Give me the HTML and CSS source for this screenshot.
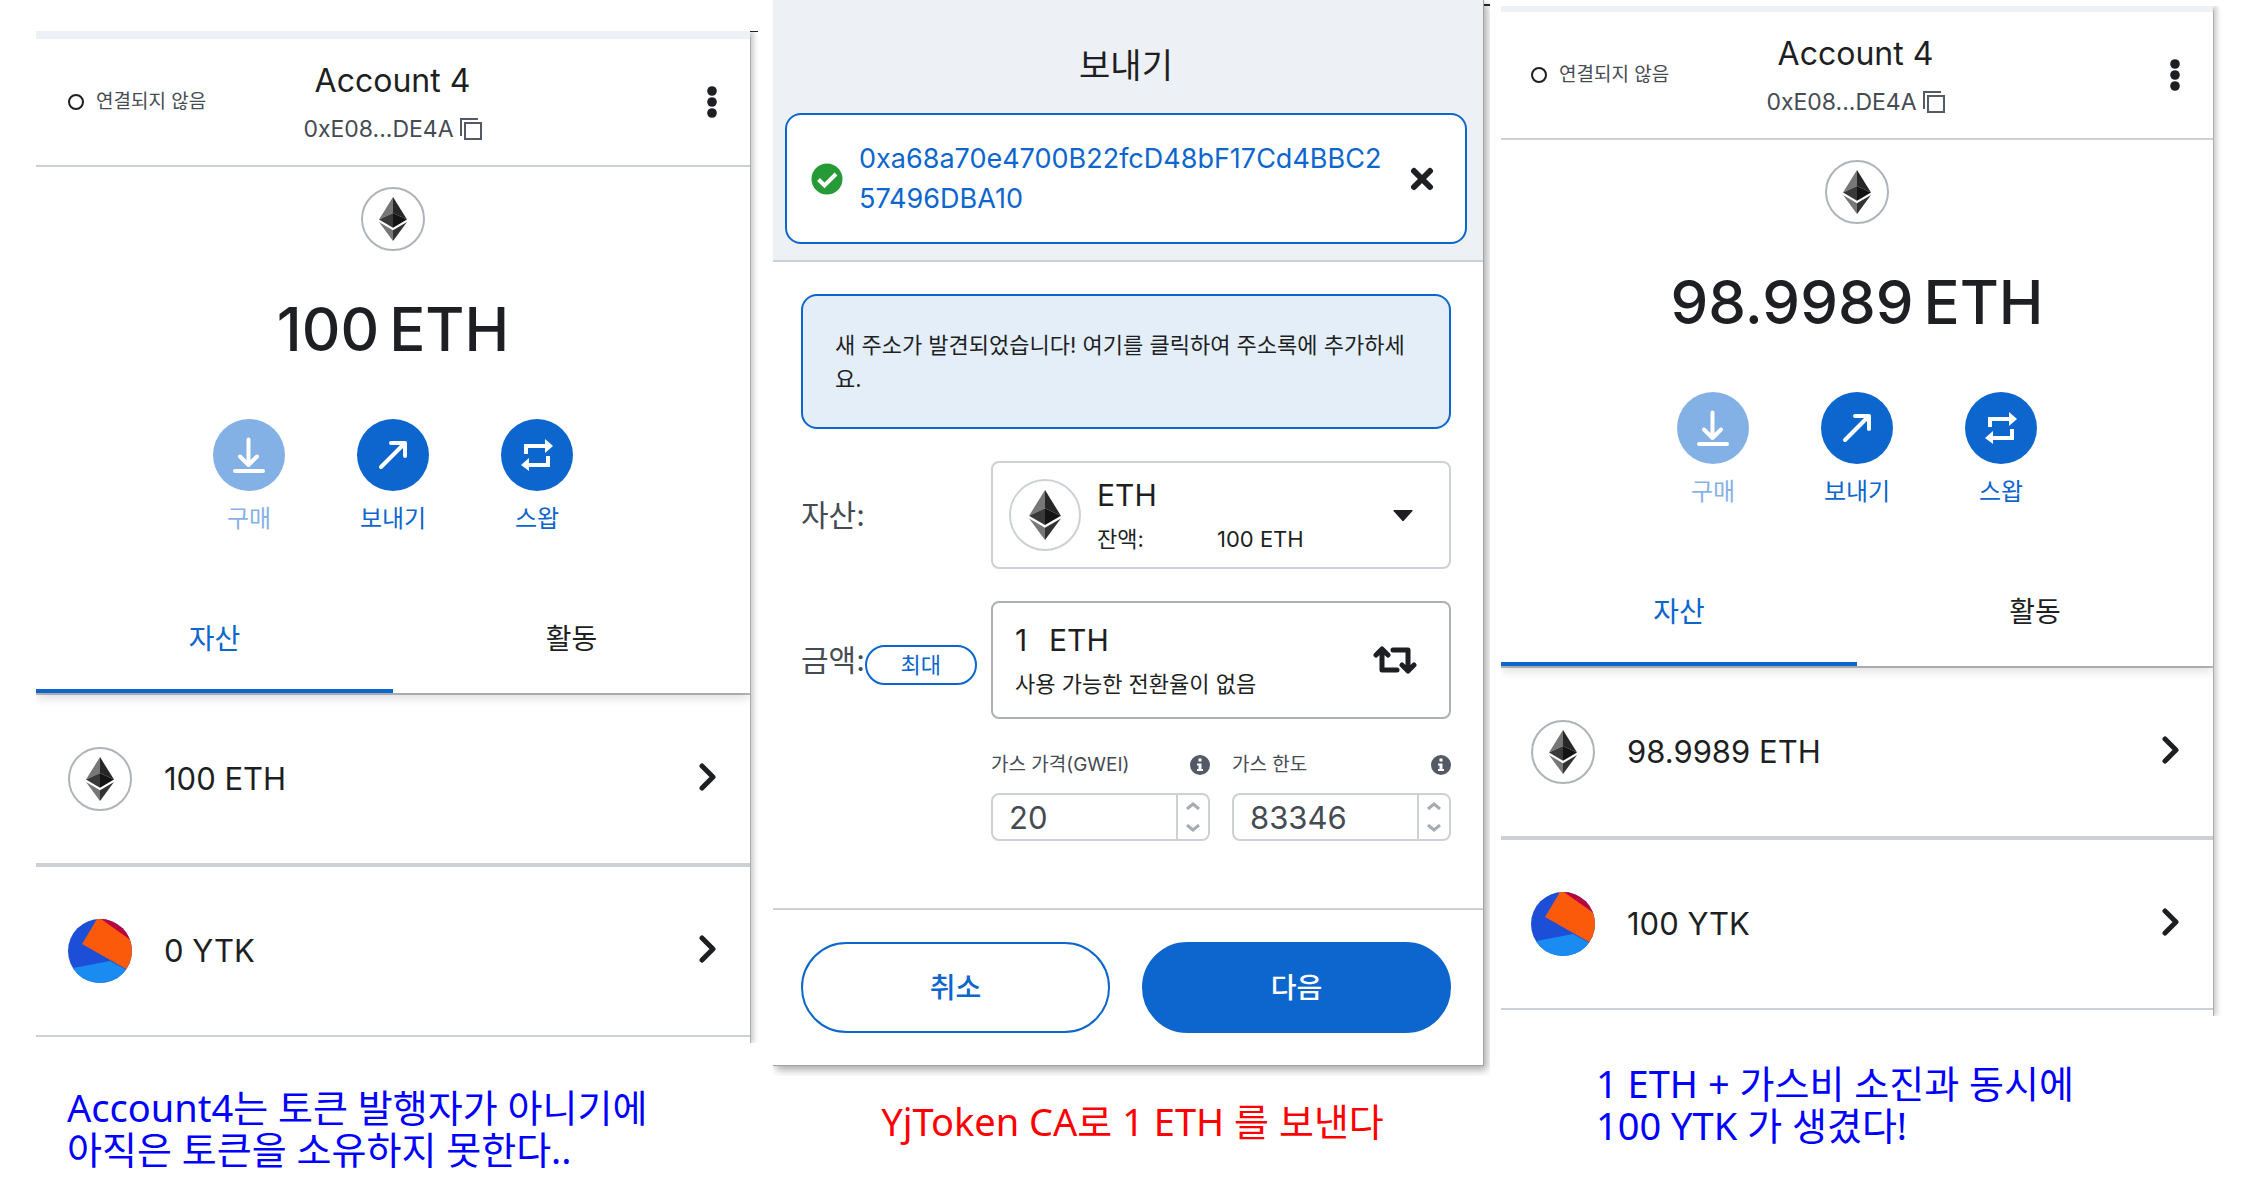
FILE: index.html
```html
<!DOCTYPE html>
<html lang="ko">
<head>
<meta charset="utf-8">
<meta name="viewport" content="width=device-width, initial-scale=1">
<title>YjToken</title>
<link rel="stylesheet" href="styles.css">
</head>
<body>
<svg class="defs" aria-hidden="true">
  <symbol id="eth" viewBox="0 0 28 44">
    <path fill="#777" d="M14 0 0 22.600 14 16z"/>
    <path fill="#272727" d="M14 0v16l14 6.600z"/>
    <path fill="#393939" d="M0 22.600 14 16v14.700z"/>
    <path fill="#141414" d="M14 16v14.700l14-8.100z"/>
    <path fill="#777" d="M0 25 14 33.200V44z"/>
    <path fill="#333" d="M28 25 14 33.200V44z"/>
  </symbol>
  <symbol id="copy" viewBox="0 0 22 22">
    <path fill="none" stroke="#535a66" stroke-width="2" d="M1 18V1h17M5 5h16v16H5z"/>
  </symbol>
  <symbol id="dots" viewBox="0 0 10 32">
    <g fill="#1d1f23"><circle cx="5" cy="5" r="4.800"/><circle cx="5" cy="16" r="4.800"/><circle cx="5" cy="27" r="4.800"/></g>
  </symbol>
  <symbol id="chevron" viewBox="0 0 17 28">
    <path fill="none" stroke="#1d1f23" stroke-width="5" stroke-linecap="round" stroke-linejoin="round" d="m3 3 11 11L3 25"/>
  </symbol>
  <symbol id="buy" viewBox="0 0 32 36">
    <g fill="none" stroke="#fff" stroke-width="4" stroke-linecap="round" stroke-linejoin="round"><path d="M15.500 2.500v25M7 19.500l8.500 8.500 8.500-8.500"/><path d="M2 34h28"/></g>
  </symbol>
  <symbol id="send" viewBox="0 0 30 30">
    <path fill="none" stroke="#fff" stroke-width="4" stroke-linecap="round" stroke-linejoin="round" d="M3 27 27 3M13 3h14v13"/>
  </symbol>
  <symbol id="swap" viewBox="0 0 32 32">
    <g fill="none" stroke="#fff" stroke-width="4"><path d="M5 15V7h20"/><path d="M27 17v9H8"/></g>
    <path fill="#fff" d="M24 0l8 7-8 7zM8 19l-8 7 8 6z"/>
  </symbol>
  <symbol id="ytk" viewBox="0 0 64 64">
    <path fill="#1c4ed8" d="M0 0h64v64H0z"/>
    <path fill="#b8003f" d="M30 0h34v24z"/>
    <path fill="#fa5a0a" d="M29 0h4l31 22v34l-6-6-44-25z"/>
    <path fill="#1a8bf0" d="M0 50 42 42l22 12v10H0z"/>
  </symbol>
  <symbol id="info" viewBox="0 0 20 20">
    <circle cx="10" cy="10" r="10" fill="#535a66"/>
    <path fill="#fff" d="M8.500 3.500h3v3h-3zM7 8.500h4.500V14H13v2H7v-2h1.500v-3.500H7z"/>
  </symbol>
  <symbol id="up" viewBox="0 0 14 8"><path fill="none" stroke="#a5abb1" stroke-width="3" d="m1 7 6-5 6 5"/></symbol>
  <symbol id="down" viewBox="0 0 14 8"><path fill="none" stroke="#a5abb1" stroke-width="3" d="m1 1 6 5 6-5"/></symbol>
</svg>

<main class="board">
  <section class="column column-before">
    <article class="wallet">
      <header class="wallet-header">
        <span class="status"><i class="status-dot"></i>연결되지 않음</span>
        <div class="account">
          <h2 class="account-name">Account 4</h2>
          <button class="address" type="button">0xE08...DE4A<svg width="22" height="22"><use href="#copy"/></svg></button>
        </div>
        <button class="menu" type="button" aria-label="메뉴"><svg width="10" height="32"><use href="#dots"/></svg></button>
      </header>
      <div class="overview">
        <span class="token"><svg width="28" height="44"><use href="#eth"/></svg></span>
        <p class="balance"><span>100</span><span>ETH</span></p>
        <div class="actions">
          <button class="action" type="button" disabled><span class="disc"><svg width="32" height="36"><use href="#buy"/></svg></span>구매</button>
          <button class="action" type="button"><span class="disc"><svg width="30" height="30"><use href="#send"/></svg></span>보내기</button>
          <button class="action" type="button"><span class="disc"><svg width="32" height="32"><use href="#swap"/></svg></span>스왑</button>
        </div>
      </div>
      <div class="tabs" role="tablist">
        <button class="tab" type="button" role="tab" aria-selected="true">자산</button>
        <button class="tab" type="button" role="tab" aria-selected="false">활동</button>
      </div>
      <ul class="assets">
        <li><button class="asset" type="button"><span class="token"><svg width="28" height="44"><use href="#eth"/></svg></span><span class="asset-name">100 ETH</span><svg class="chevron" width="17" height="28"><use href="#chevron"/></svg></button></li>
        <li><button class="asset" type="button"><svg class="token-art" width="64" height="64"><use href="#ytk"/></svg><span class="asset-name">0 YTK</span><svg class="chevron" width="17" height="28"><use href="#chevron"/></svg></button></li>
      </ul>
    </article>
    <p class="note note-before">Account4는 토큰 발행자가 아니기에<br>아직은 토큰을 소유하지 못한다..</p>
  </section>

  <section class="column column-send">
    <form class="send">
      <header class="send-header">
        <h2 class="send-title">보내기</h2>
        <div class="recipient">
          <svg width="32" height="32" viewBox="0 0 32 32"><circle cx="16" cy="16" r="15.500" fill="#259a36"/><path fill="none" stroke="#fff" stroke-width="4" d="m7.500 16.500 6 6L25 11"/></svg>
          <span class="recipient-address">0xa68a70e4700B22fcD48bF17Cd4BBC257496DBA10</span>
          <button class="clear" type="button" aria-label="지우기"><svg width="24" height="24" viewBox="0 0 24 24"><path fill="none" stroke="#1d1f23" stroke-width="6" stroke-linecap="round" d="m4 4 16 16M20 4 4 20"/></svg></button>
        </div>
      </header>
      <div class="send-body">
        <button class="notice" type="button">새 주소가 발견되었습니다! 여기를 클릭하여 주소록에 추가하세요.</button>
        <div class="row">
          <div class="row-label"><label for="asset">자산:</label></div>
          <div class="field field-asset">
            <span class="token token-large"><svg width="32" height="50"><use href="#eth"/></svg></span>
            <div class="field-text">
              <select class="asset-select" id="asset"><option>ETH</option></select>
              <p class="field-sub"><span class="field-key">잔액:</span><span>100 ETH</span></p>
            </div>
            <svg width="20" height="11" viewBox="0 0 20 11"><path fill="#1d1f23" d="M1 0h18q1 0 .5 1L11 10.500q-1 1-2 0L.5 1Q0 0 1 0z"/></svg>
          </div>
        </div>
        <div class="row">
          <div class="row-label"><label for="amount">금액:</label><button class="max" type="button">최대</button></div>
          <div class="field field-amount">
            <div class="field-text">
              <div class="amount-line"><input class="amount" id="amount" value="1"><span>ETH</span></div>
              <p class="field-sub">사용 가능한 전환율이 없음</p>
            </div>
            <button class="switch" type="button" aria-label="통화 전환"><svg width="44" height="28" viewBox="0 0 44 28"><g fill="none" stroke="#1d1f23" stroke-width="5" stroke-linecap="round" stroke-linejoin="round"><path d="M9 4v20h15M3 9l6-6 6 6"/><path d="M20 4h15v20M29 19l6 6 6-6"/></g></svg></button>
          </div>
        </div>
        <div class="gas">
          <div class="gas-item">
            <div class="gas-label"><label for="price">가스 가격(GWEI)</label><svg width="20" height="20"><use href="#info"/></svg></div>
            <div class="stepper"><input id="price" value="20"><div class="steps"><button type="button" aria-label="증가"><svg width="14" height="8"><use href="#up"/></svg></button><button type="button" aria-label="감소"><svg width="14" height="8"><use href="#down"/></svg></button></div></div>
          </div>
          <div class="gas-item">
            <div class="gas-label"><label for="limit">가스 한도</label><svg width="20" height="20"><use href="#info"/></svg></div>
            <div class="stepper"><input id="limit" value="83346"><div class="steps"><button type="button" aria-label="증가"><svg width="14" height="8"><use href="#up"/></svg></button><button type="button" aria-label="감소"><svg width="14" height="8"><use href="#down"/></svg></button></div></div>
          </div>
        </div>
      </div>
      <footer class="send-footer">
        <button class="button" type="button">취소</button>
        <button class="button button-primary" type="button">다음</button>
      </footer>
    </form>
    <p class="note note-send">YjToken CA로 1 ETH 를 보낸다</p>
  </section>

  <section class="column column-after">
    <article class="wallet wallet-after">
      <header class="wallet-header">
        <span class="status"><i class="status-dot"></i>연결되지 않음</span>
        <div class="account">
          <h2 class="account-name">Account 4</h2>
          <button class="address" type="button">0xE08...DE4A<svg width="22" height="22"><use href="#copy"/></svg></button>
        </div>
        <button class="menu" type="button" aria-label="메뉴"><svg width="10" height="32"><use href="#dots"/></svg></button>
      </header>
      <div class="overview">
        <span class="token"><svg width="28" height="44"><use href="#eth"/></svg></span>
        <p class="balance"><span>98.9989</span><span>ETH</span></p>
        <div class="actions">
          <button class="action" type="button" disabled><span class="disc"><svg width="32" height="36"><use href="#buy"/></svg></span>구매</button>
          <button class="action" type="button"><span class="disc"><svg width="30" height="30"><use href="#send"/></svg></span>보내기</button>
          <button class="action" type="button"><span class="disc"><svg width="32" height="32"><use href="#swap"/></svg></span>스왑</button>
        </div>
      </div>
      <div class="tabs" role="tablist">
        <button class="tab" type="button" role="tab" aria-selected="true">자산</button>
        <button class="tab" type="button" role="tab" aria-selected="false">활동</button>
      </div>
      <ul class="assets">
        <li><button class="asset" type="button"><span class="token"><svg width="28" height="44"><use href="#eth"/></svg></span><span class="asset-name">98.9989 ETH</span><svg class="chevron" width="17" height="28"><use href="#chevron"/></svg></button></li>
        <li><button class="asset" type="button"><svg class="token-art" width="64" height="64"><use href="#ytk"/></svg><span class="asset-name">100 YTK</span><svg class="chevron" width="17" height="28"><use href="#chevron"/></svg></button></li>
      </ul>
    </article>
    <p class="note note-after">1 ETH + 가스비 소진과 동시에<br>100 YTK 가 생겼다!</p>
  </section>
</main>
</body>
</html>
```
FILE: styles.css
```css
:root {
  --blue: #0c66cd;
  --ink: #1d1f23;
  --slate: #454b52;
  --line: #cdd1d6;
  --shade: #edf0f4;
}

* { box-sizing: border-box; }

body {
  margin: 0;
  background: #fff;
  color: var(--ink);
  font-family: "Inter", "Noto Sans CJK KR", sans-serif;
  font-size: 24px;
}

h2, p, ul { margin: 0; padding: 0; font-weight: 400; }
ul { list-style: none; }
svg { display: block; flex: none; }
.defs { position: absolute; width: 0; height: 0; }

button, input, select {
  margin: 0;
  padding: 0;
  border: 0;
  background: none;
  color: inherit;
  font: inherit;
}

.board {
  display: grid;
  grid-template-columns: 36fr 715fr 22fr 711fr 17fr 713fr 43fr;
}
.column { min-width: 0; }
.column-before { grid-column: 2; padding-top: 31px; }
.column-send { grid-column: 4; }
.column-after { grid-column: 6; padding-top: 6px; }

/* Wallet panel */
.wallet {
  position: relative;
  padding-bottom: 6px;
  border-top: 8px solid var(--shade);
  border-right: 1px solid #a9abad;
  box-shadow: 3px 0 5px #0003;
  clip-path: inset(0 -8px 0 0);
}
.wallet-after { border-top-width: 6px; }
.column-before .wallet::after,
.column-send::after {
  content: "";
  position: absolute;
  top: -8px;
  right: -8px;
  width: 8px;
  height: 1px;
  background: #222;
}
.wallet-header {
  display: grid;
  grid-template-columns: 1fr auto 1fr;
  align-items: center;
  height: 128px;
  padding: 0 33px 0 32px;
  border-bottom: 2px solid var(--line);
}
.wallet-after .wallet-header { padding-left: 30px; }
.status {
  display: flex;
  align-items: center;
  gap: 12px;
  color: var(--slate);
  font-size: 19px;
  line-height: 24px;
}
.status-dot {
  width: 16px;
  height: 16px;
  border: 2px solid var(--ink);
  border-radius: 50%;
}
.account { display: flex; flex-direction: column; align-items: center; padding-top: 6px; }
.account-name { font-size: 32px; line-height: 48px; }
.address {
  display: flex;
  align-items: center;
  gap: 6px;
  color: var(--slate);
  font-size: 23px;
  line-height: 48px;
}
.menu { justify-self: end; }

.overview {
  display: flex;
  flex-direction: column;
  align-items: center;
  padding-top: 20px;
}
.token {
  display: flex;
  flex: none;
  align-items: center;
  justify-content: center;
  width: 64px;
  height: 64px;
  border: 2px solid #afb4bb;
  border-radius: 50%;
}
.balance {
  display: flex;
  gap: 10px;
  margin-top: 34px;
  font-size: 60px;
  font-weight: 500;
  line-height: 88px;
}
.actions { display: flex; margin-top: 46px; }
.action {
  display: flex;
  flex-direction: column;
  align-items: center;
  gap: 12px;
  width: 144px;
  color: var(--blue);
  font-size: 24px;
  line-height: 32px;
}
.action:disabled { opacity: .5; }
.disc {
  display: flex;
  align-items: center;
  justify-content: center;
  width: 72px;
  height: 72px;
  border-radius: 50%;
  background: var(--blue);
}

.tabs {
  display: grid;
  grid-template-columns: 1fr 1fr;
  margin-top: 48px;
  box-shadow: 0 5px 10px #0002;
  clip-path: inset(0 0 -14px 0);
}
.tab {
  height: 110px;
  padding-top: 6px;
  border-bottom: 4px solid transparent;
  font-size: 28px;
  line-height: 40px;
}
.tab[aria-selected="true"] { color: var(--blue); border-color: var(--blue); }

.asset {
  display: flex;
  align-items: center;
  width: 100%;
  height: 172px;
  padding: 0 34px 0 32px;
  border: solid var(--line);
  border-width: 2px 0;
  text-align: left;
}
.assets li:first-child .asset { border-top-color: #bdbfc4; }
.wallet-after .asset { padding-left: 30px; }
.asset-name { flex: 1; margin-left: 32px; font-size: 31px; line-height: 40px; }
.token-art { border-radius: 50%; }
.chevron { margin-bottom: 4px; }

/* Send panel */
.column-send { position: relative; }
.column-send::after { top: 4px; right: -6px; width: 6px; height: 2px; }
.send {
  display: flex;
  flex-direction: column;
  border: solid #a0a2a4;
  border-width: 0 1px 1px 0;
  box-shadow: 3px 4px 8px #0005;
  clip-path: inset(0 -6px -10px 0);
}
.send-header {
  padding: 0 16px 16px 12px;
  border-bottom: 2px solid var(--line);
  background: var(--shade);
}
.send-title {
  padding: 42px 0 23px;
  font-size: 34px;
  line-height: 48px;
  text-align: center;
}
.recipient {
  display: flex;
  align-items: center;
  height: 131px;
  padding: 0 31px 0 24px;
  border: 2px solid var(--blue);
  border-radius: 16px;
  background: #fff;
}
.recipient-address {
  flex: 1;
  min-width: 0;
  margin: 0 20px 0 16px;
  color: var(--blue);
  font-size: 27px;
  line-height: 40px;
  word-break: break-all;
}
.send-body { padding: 32px 32px 67px 28px; }
.notice {
  display: block;
  width: 100%;
  height: 135px;
  padding: 0 32px;
  border: 2px solid var(--blue);
  border-radius: 16px;
  background: #e4eef9;
  font-size: 22px;
  line-height: 34px;
  text-align: left;
  word-break: break-all;
}
.row { display: flex; align-items: center; margin-top: 32px; }
.row-label {
  display: flex;
  align-items: center;
  width: 190px;
  color: var(--slate);
  font-size: 30px;
  line-height: 40px;
}
.max {
  width: 112px;
  height: 40px;
  margin-top: 10px;
  border: 2px solid var(--blue);
  border-radius: 20px;
  color: var(--blue);
  font-size: 22px;
  line-height: 32px;
}
.field {
  display: flex;
  flex: 1;
  align-items: center;
  border: 2px solid var(--line);
  border-radius: 8px;
}
.field-asset { height: 108px; padding: 0 36px 0 16px; }
.field-amount { height: 118px; padding: 0 32px 0 22px; border-color: #adb1b7; }
.token-large { width: 72px; height: 72px; border-color: var(--line); }
.field-text { flex: 1; padding-top: 4px; }
.field-asset .field-text { margin-left: 16px; }
.asset-select {
  display: block;
  width: 100%;
  height: 44px;
  appearance: none;
  font-size: 30px;
  line-height: 44px;
}
.field-sub { display: flex; font-size: 22px; line-height: 44px; }
.field-key { width: 120px; }
.amount-line { display: flex; font-size: 30px; line-height: 44px; }
.amount { width: 34px; height: 44px; }

.gas {
  display: grid;
  grid-template-columns: 1fr 1fr;
  gap: 22px;
  margin: 30px 0 0 190px;
}
.gas-label {
  display: flex;
  align-items: center;
  justify-content: space-between;
  color: var(--slate);
  font-size: 19px;
  line-height: 32px;
}
.stepper {
  display: flex;
  height: 48px;
  margin-top: 12px;
  border: 2px solid var(--line);
  border-radius: 8px;
  color: var(--slate);
}
.stepper input { flex: 1; width: 0; padding: 2px 0 0 16px; font-size: 31px; line-height: 42px; }
.steps { display: grid; width: 32px; border-left: 2px solid var(--line); }
.steps button { display: flex; align-items: center; justify-content: center; }

.send-footer {
  display: grid;
  grid-template-columns: 1fr 1fr;
  gap: 32px;
  padding: 32px 32px 32px 28px;
  border-top: 2px solid var(--line);
}
.button {
  height: 91px;
  border: 2px solid var(--blue);
  border-radius: 46px;
  color: var(--blue);
  font-size: 28px;
  font-weight: 500;
  line-height: 40px;
}
.button-primary { background: var(--blue); color: #fff; }

/* Captions under the panels */
.note {
  color: #00f;
  font-family: "Noto Sans", "Noto Sans CJK KR", sans-serif;
  font-size: 38px;
  line-height: 42px;
}
.note-before { padding: 43px 0 0 31px; }
.note-send { padding: 34px 0 0 8px; color: #f00; text-align: center; }
.note-after { padding: 46px 0 0 95px; }
```
